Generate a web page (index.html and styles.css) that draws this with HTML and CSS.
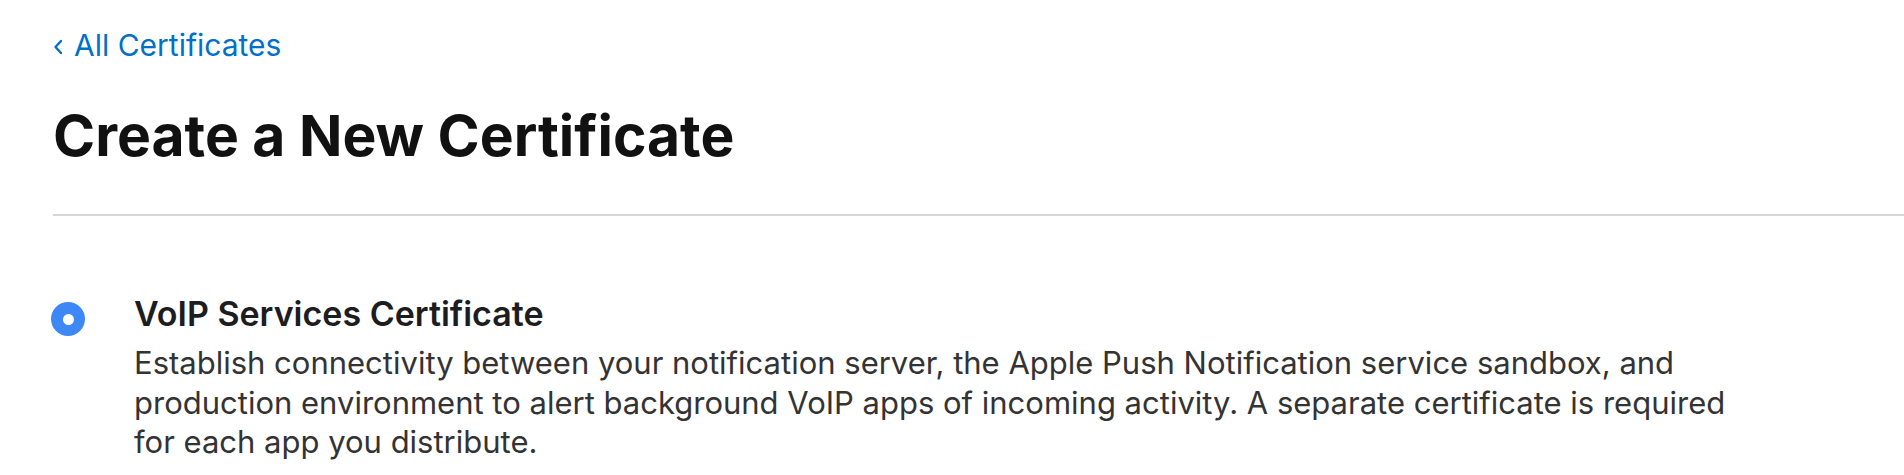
FILE: index.html
```html
<!DOCTYPE html>
<html lang="en">
<head>
<meta charset="utf-8">
<title>Create a New Certificate</title>
<link rel="stylesheet" href="styles.css">
</head>
<body>
<main class="page">
  <a class="back" href="#">
    <svg class="chev" width="10" height="16" viewBox="0 0 10 16"><path d="M8 2 L2.5 8 L8 14" fill="none" stroke="#0070c9" stroke-width="2.4" stroke-linecap="round" stroke-linejoin="round"/></svg>
    <span>All Certificates</span>
  </a>
  <h1 class="title">Create a New Certificate</h1>
  <hr class="divider">
  <section class="option">
    <span class="radio"><span class="radio-dot"></span></span>
    <div class="option-text">
      <h2 class="option-title">VoIP Services Certificate</h2>
      <p class="option-desc">Establish connectivity between your notification server, the Apple Push Notification service sandbox, and production environment to alert background VoIP apps of incoming activity. A separate certificate is required for each app you distribute.</p>
    </div>
  </section>
</main>
</body>
</html>
```
FILE: styles.css
```css
html, body {
  margin: 0;
  padding: 0;
  background: #ffffff;
}
body {
  font-family: Inter, "Liberation Sans", sans-serif;
  color: #1d1d1f;
  overflow: hidden;
}
.page {
  padding: 27px 0 0 53px;
}
.back {
  display: flex;
  align-items: center;
  gap: 11px;
  color: #0070c9;
  text-decoration: none;
  font-size: 30px;
  line-height: 36px;
  height: 36px;
}
.chev {
  display: block;
  margin-top: 3px;
}
.title {
  margin: 41px 0 0 0;
  font-size: 57px;
  line-height: 64px;
  font-weight: 700;
  color: #111111;
}
.divider {
  margin: 46px 0 0 0;
  border: 0;
  height: 2px;
  background: #d6d6d6;
}
.option {
  display: flex;
  align-items: flex-start;
  margin-top: 77px;
}
.radio {
  flex: none;
  width: 34px;
  height: 34px;
  border-radius: 50%;
  background: #3e87f6;
  display: flex;
  align-items: center;
  justify-content: center;
  margin-top: 9px;
  margin-left: -2px;
}
.radio-dot {
  width: 11px;
  height: 11px;
  border-radius: 50%;
  background: #ffffff;
}
.option-text {
  margin-left: 49px;
  width: 1630px;
}
.option-title {
  margin: 0;
  font-size: 34px;
  line-height: 42px;
  font-weight: 600;
  color: #1d1d1f;
}
.option-desc {
  margin: 8px 0 0 0;
  font-size: 31px;
  line-height: 39.5px;
  color: #333333;
}
```
